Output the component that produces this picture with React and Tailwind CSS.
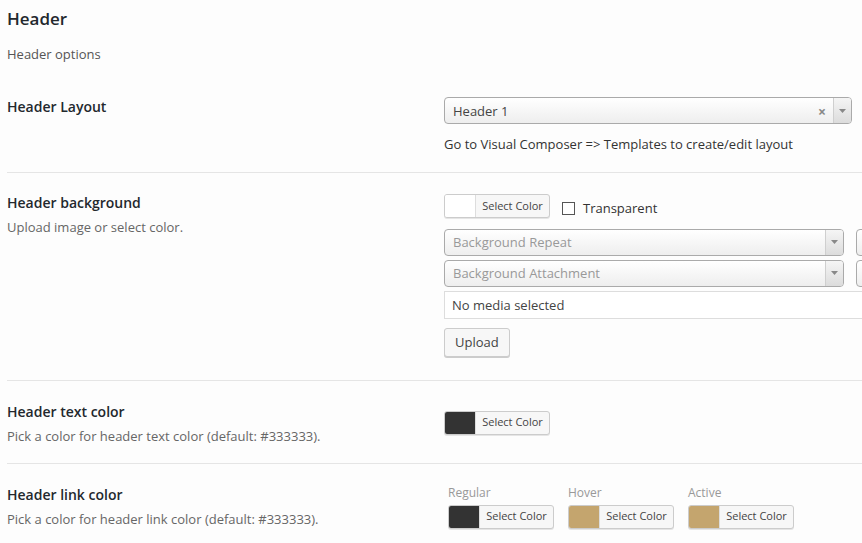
import React from 'react';

const font = { fontFamily: '"Open Sans", "Noto Sans", sans-serif' };

function ColorButton({ color }) {
  return (
    <div className="flex h-[24px] w-[106px] rounded-[3px] border border-[#cccccc] overflow-hidden shadow-[0_1px_0_#e5e5e5] bg-[#f7f7f7]">
      <span className="w-[31px] h-full border-r border-[#dddddd]" style={{ background: color }} />
      <span className="flex-1 flex items-center justify-center text-[11px] text-[#444]">Select Color</span>
    </div>
  );
}

function Arrow() {
  return (
    <span className="w-[18px] h-full flex items-center justify-center border-l border-[#cfcfcf] bg-gradient-to-b from-[#f5f5f5] to-[#dcdcdc]">
      <svg width="7" height="4" viewBox="0 0 7 4"><path d="M0 0h7L3.5 4z" fill="#888" /></svg>
    </span>
  );
}

function Select({ value, placeholder, clear, width }) {
  return (
    <div
      className="flex h-[27px] shrink-0 items-stretch rounded-[4px] border border-[#aaaaaa] overflow-hidden bg-gradient-to-b from-white to-[#eeeeee]"
      style={{ width }}
    >
      <span className={`flex-1 flex items-center pl-[8px] pt-[2px] text-[13px] ${value ? 'text-[#444]' : 'text-[#999]'}`}>
        {value || placeholder}
      </span>
      {clear && <span className="flex items-center pr-[7px] pt-[2px] text-[14px] font-bold text-[#888]">×</span>}
      <Arrow />
    </div>
  );
}

function Row({ title, desc, children, last }) {
  return (
    <div className={`flex ${last ? '' : 'border-b border-[#e5e5e5]'}`}>
      <div className="w-[437px] shrink-0">
        <div className="text-[14px] font-semibold leading-5 text-[#23282d]">{title}</div>
        {desc && <div className="mt-1 text-[13px] leading-5 text-[#666]">{desc}</div>}
      </div>
      <div className="flex-1 min-w-0">{children}</div>
    </div>
  );
}

export default function App() {
  return (
    <div className="w-[862px] h-[543px] overflow-hidden bg-[#fdfdfd] pl-[7px]" style={font}>
      <h2 className="pt-[8px] text-[17px] font-semibold leading-[22px] text-[#23282d]">Header</h2>
      <p className="mt-[14px] text-[13px] leading-5 text-[#555]">Header options</p>

      <div className="mt-[33px]">
        <Row title="Header Layout">
          <div className="pb-[18px]">
            <Select value="Header 1" clear width={408} />
            <p className="mt-[10px] text-[13px] leading-5 text-[#333]">Go to Visual Composer =&gt; Templates to create/edit layout</p>
          </div>
        </Row>

        <div className="pt-[20px]">
          <Row title="Header background" desc="Upload image or select color.">
            <div className="pb-[23px] pt-[1px]">
              <div className="flex items-center gap-[12px]">
                <ColorButton color="#ffffff" />
                <label className="flex items-center gap-[8px] pt-[5px] text-[13px] text-[#333]">
                  <span className="w-[13px] h-[13px] border border-[#555] bg-white" />
                  Transparent
                </label>
              </div>
              <div className="mt-[10px] flex gap-[12px]">
                <Select placeholder="Background Repeat" width={400} />
                <Select placeholder="" width={200} />
              </div>
              <div className="mt-[4px] flex gap-[12px]">
                <Select placeholder="Background Attachment" width={400} />
                <Select placeholder="" width={200} />
              </div>
              <div className="mt-[4px] h-[28px] w-[600px] flex items-center pl-[7px] pt-[2px] border border-[#dddddd] bg-white text-[13px] text-[#444]">
                No media selected
              </div>
              <button className="mt-[9px] h-[29px] px-[10px] pt-[2px] rounded-[3px] border border-[#cccccc] bg-[#f7f7f7] shadow-[0_1px_0_#cccccc] text-[13px] text-[#444]">
                Upload
              </button>
            </div>
          </Row>
        </div>

        <div className="pt-[21px]">
          <Row title="Header text color" desc="Pick a color for header text color (default: #333333).">
            <div className="pt-[9px] pb-[28px]">
              <ColorButton color="#333333" />
            </div>
          </Row>
        </div>

        <div className="pt-[21px]">
          <Row title="Header link color" desc="Pick a color for header link color (default: #333333)." last>
            <div className="flex gap-[14px] pl-[4px]">
              {[['Regular', '#333333'], ['Hover', '#c4a56e'], ['Active', '#c4a56e']].map(([l, c]) => (
                <div key={l}>
                  <div className="text-[12px] leading-[16px] text-[#999]">{l}</div>
                  <div className="mt-[4px]">
                    <ColorButton color={c} />
                  </div>
                </div>
              ))}
            </div>
          </Row>
        </div>
      </div>
    </div>
  );
}
